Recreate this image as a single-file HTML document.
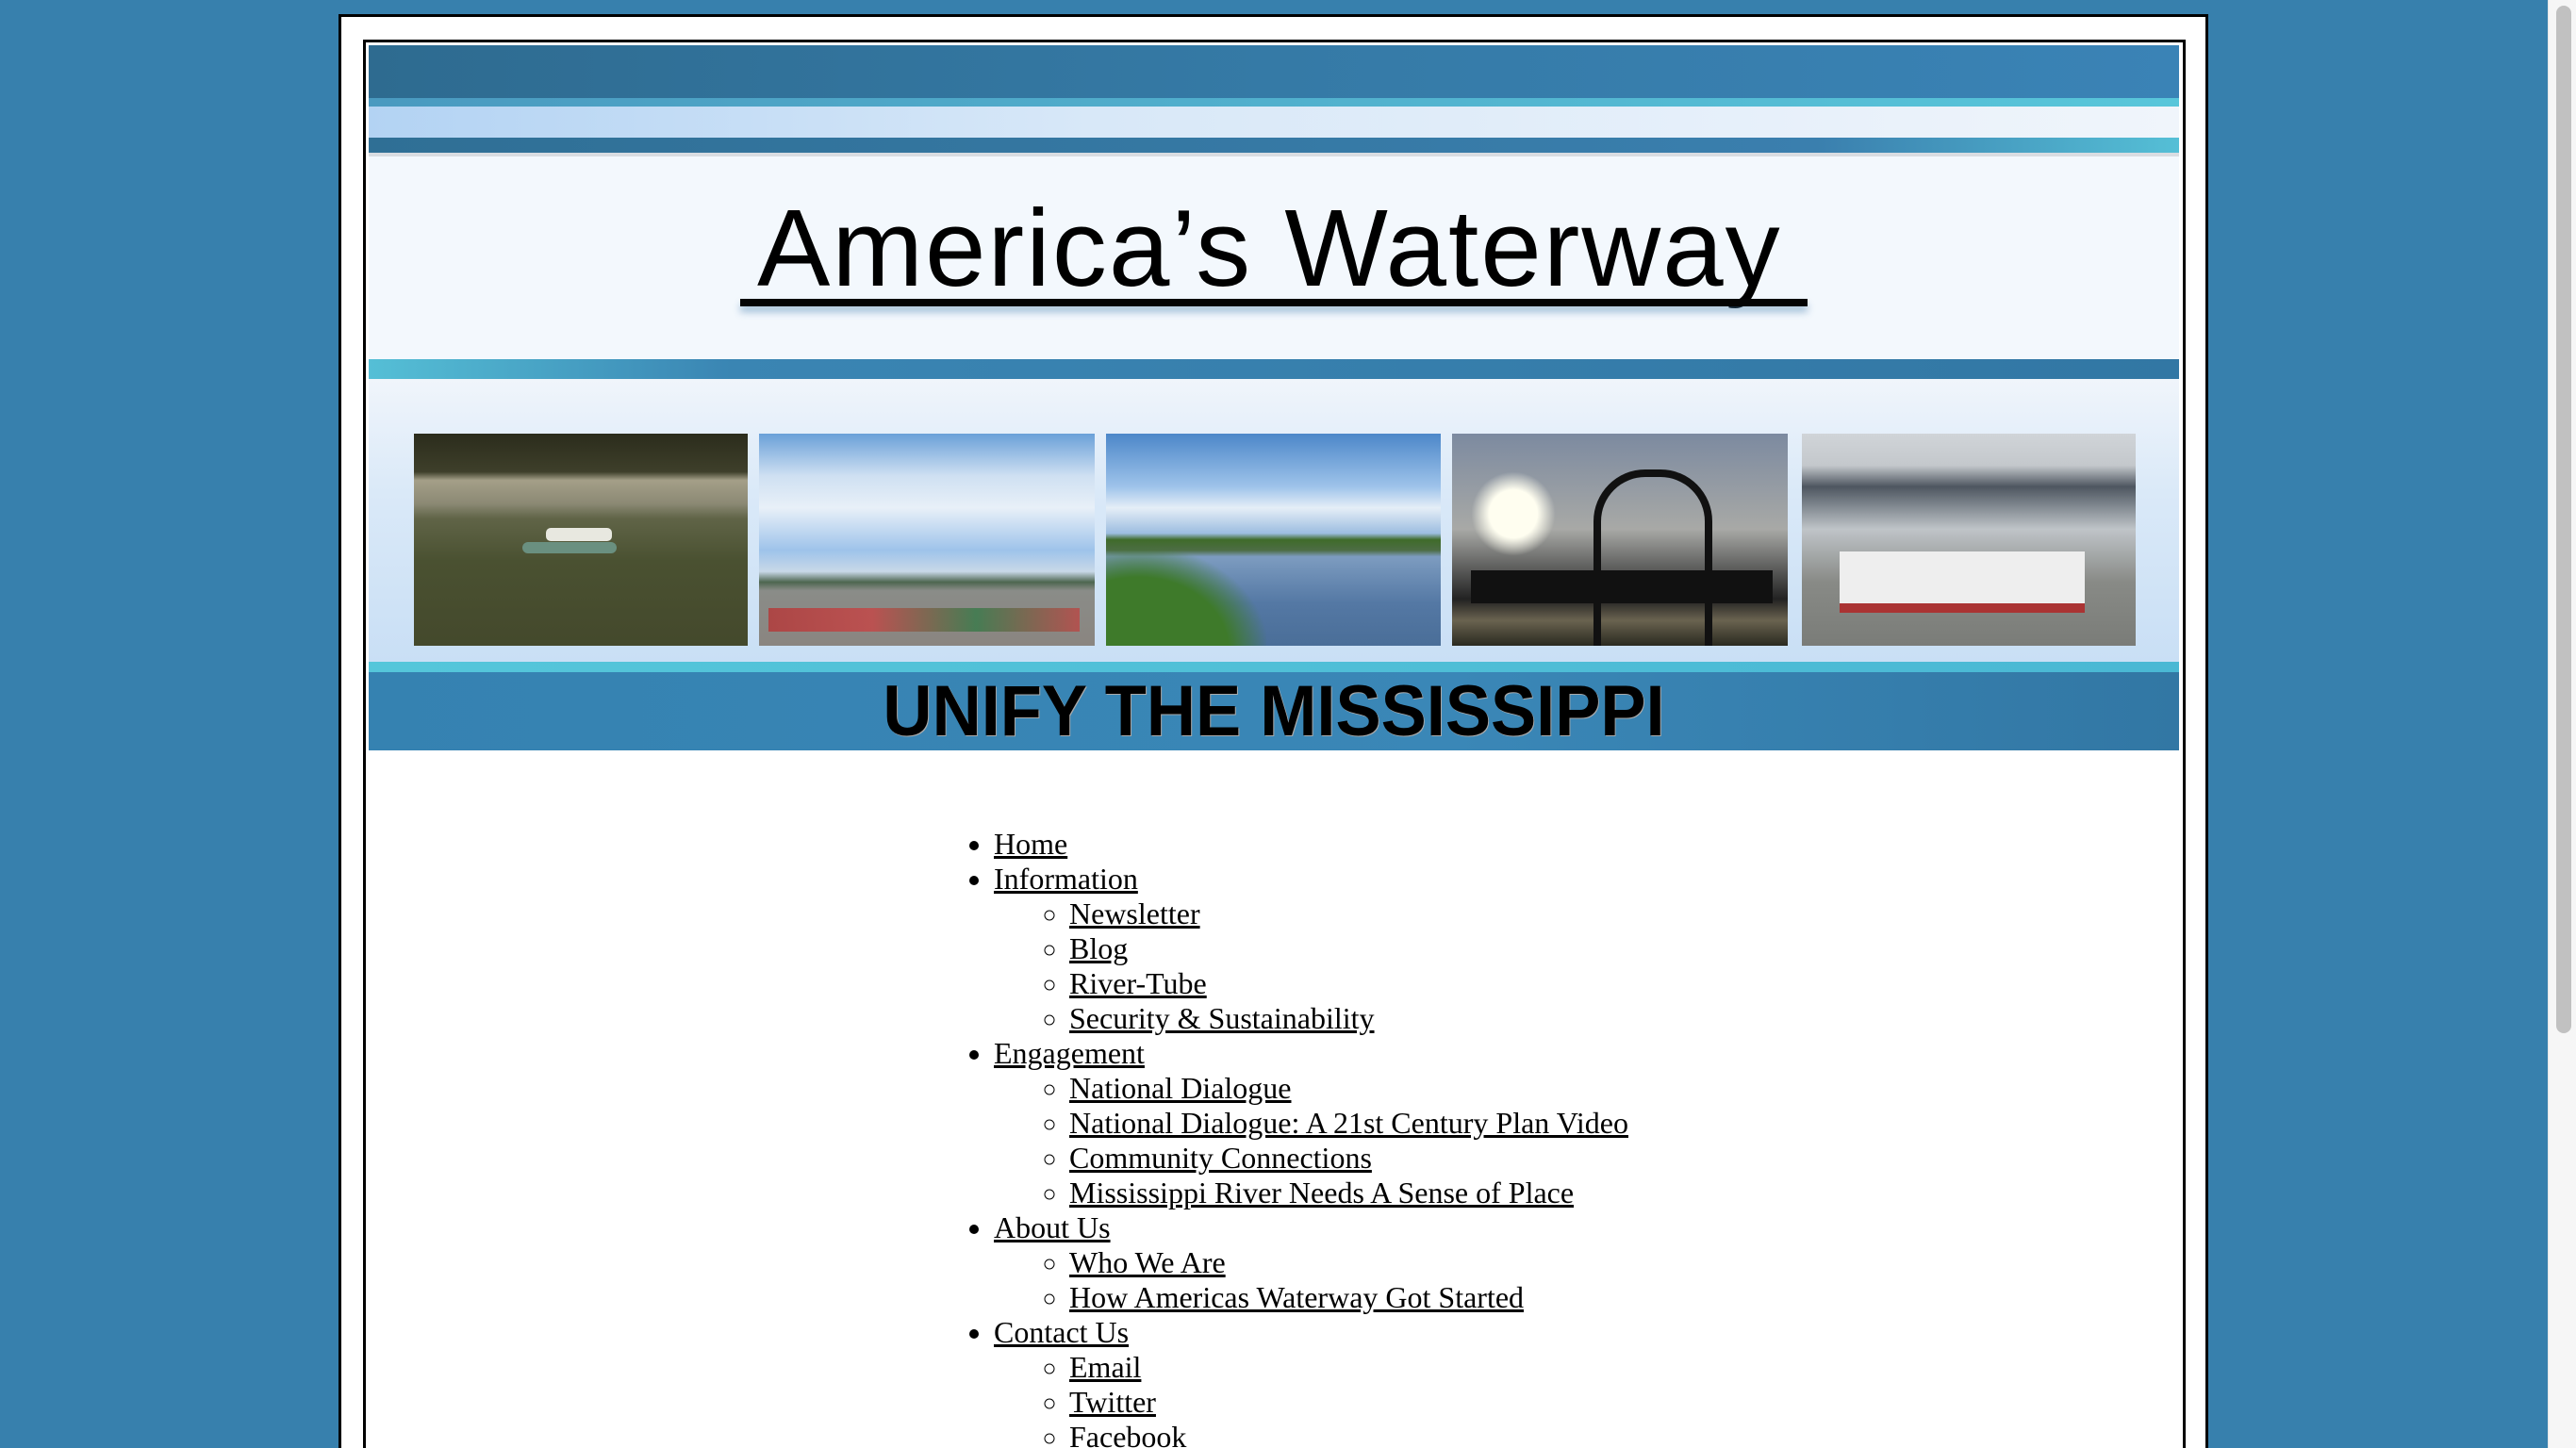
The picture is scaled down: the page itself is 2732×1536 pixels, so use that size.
<!DOCTYPE html>
<html><head><meta charset="utf-8">
<style>
html,body{margin:0;padding:0;width:2732px;height:1536px;overflow:hidden;}
body{background:#3780ad;position:relative;font-family:"Liberation Serif",serif;}
.outer{position:absolute;left:359px;top:15px;width:1977px;height:1530px;background:#fff;border:3px solid #000;}
.inner{position:absolute;left:385px;top:42px;width:1927px;height:1500px;border:3px solid #000;background:#fff;}
.hdr{position:absolute;left:391px;top:48px;width:1920px;height:748px;overflow:hidden;background:#f3f8fd;}
.b{position:absolute;left:0;width:100%;}
.title{position:absolute;left:412px;top:157px;font-family:"Liberation Sans",sans-serif;font-size:116px;letter-spacing:2px;color:#000;line-height:1;}
.uline{position:absolute;left:394px;top:269px;width:1132px;height:8px;background:#050505;box-shadow:0 6px 8px rgba(60,120,170,.45);}
.unify{position:absolute;left:0;width:100%;top:662px;text-align:center;font-family:"Liberation Sans",sans-serif;font-weight:bold;font-size:76px;letter-spacing:0px;color:#000;text-shadow:1px 1px 0 #aaa;line-height:90px;transform:scaleX(0.95);}
.ph{position:absolute;top:412px;height:225px;overflow:hidden;}
ul{margin:0;padding:0;list-style:disc;}
.nav{position:absolute;left:1054px;top:877px;font-size:32px;line-height:37px;}
.nav ul ul{padding-left:80px;list-style:circle;}
.nav a{color:#000;text-decoration:underline;}
.sb{position:absolute;left:2702px;top:0;width:30px;height:1536px;background:#f6f6f6;border-left:1px solid #e6e6e6;}
.th{position:absolute;left:8px;top:6px;width:16px;height:1090px;background:#c1c1c1;border-radius:8px;}
</style></head><body>
<div class="outer"></div>
<div class="inner"></div>
<div class="hdr">
 <div class="b" style="top:0;height:58px;background:linear-gradient(90deg,#2e6b90,#357aa6 50%,#3a83b6);"></div>
 <div class="b" style="top:56px;height:9px;background:linear-gradient(90deg,#4a9ac0,#58c6da);"></div>
 <div class="b" style="top:65px;height:33px;background:linear-gradient(90deg,#b3d3f3,#d8e8f8 40%,#f0f5fb);"></div>
 <div class="b" style="top:98px;height:16px;background:linear-gradient(90deg,#2f6f95,#3a7fae 80%,#55bfd6);"></div>
 <div class="b" style="top:114px;height:4px;background:#d9dde2;"></div>
 <div class="title">America’s Waterway</div>
 <div class="uline"></div>
 <div class="b" style="top:333px;height:21px;background:linear-gradient(90deg,#55bfd6,#3a85b3 20%,#3277a4);"></div>
 <div class="b" style="top:354px;height:300px;background:linear-gradient(180deg,#f0f5fb,#dae9f8 40%,#c9dff5);"></div>
 <div class="ph" style="left:48px;width:354px;background:linear-gradient(180deg,#2b2c1c 0%,#3e3f2a 18%,#a49f88 22%,#8b8974 33%,#606447 40%,#4a5131 60%,#44492c 100%);"><div style="position:absolute;left:115px;top:115px;width:100px;height:12px;background:#6a9080;border-radius:6px"></div><div style="position:absolute;left:140px;top:100px;width:70px;height:14px;background:#e8e8e0;border-radius:5px"></div></div>
 <div class="ph" style="left:414px;width:356px;background:linear-gradient(180deg,#6aa0d8 0%,#cfe0f2 20%,#e8f0f8 35%,#9ec3ea 55%,#c8d8e8 65%,#4d6650 70%,#8a8c88 74%,#8a8580 100%);"><div style="position:absolute;left:10px;top:185px;width:330px;height:25px;background:linear-gradient(90deg,#b23b3b,#c34848,#3b7a4b,#b84a48);opacity:.85"></div></div>
 <div class="ph" style="left:782px;width:355px;background:linear-gradient(180deg,#4c87c9 0%,#9ec3ea 25%,#e5eef7 35%,#9cbde0 47%,#3f6b2a 50%,#4d6d45 55%,#7d9cc0 58%,#5478a4 80%,#4a6e98 100%);"><div style="position:absolute;left:0;top:120px;width:170px;height:110px;background:radial-gradient(ellipse at 20% 100%,#3e7a2a 50%,rgba(60,120,40,0) 72%)"></div></div>
 <div class="ph" style="left:1149px;width:356px;background:linear-gradient(180deg,#7c8aa0 0%,#a8a9a6 45%,#222 78%,#6a6350 88%,#2a2a20 100%);"><div style="position:absolute;left:20px;top:40px;width:90px;height:90px;border-radius:50%;background:radial-gradient(#fffef0 40%,rgba(255,250,220,0) 70%)"></div><div style="position:absolute;left:150px;top:38px;width:110px;height:200px;border:8px solid #111;border-bottom:none;border-radius:55px 55px 0 0"></div><div style="position:absolute;left:20px;top:145px;width:320px;height:35px;background:#111"></div></div>
 <div class="ph" style="left:1520px;width:354px;background:linear-gradient(180deg,#d0d4d8 0%,#c4c8cc 15%,#4e5660 25%,#7a828a 33%,#bfc4c8 45%,#888a86 70%,#7a7c78 100%);"><div style="position:absolute;left:40px;top:125px;width:260px;height:55px;background:#eee;border-bottom:10px solid #a33"></div></div>
 <div class="b" style="top:654px;height:11px;background:linear-gradient(90deg,#55c6da,#4ab8d4);"></div>
 <div class="b" style="top:665px;height:83px;background:linear-gradient(90deg,#3582b1,#3a87b7 60%,#3277a4);"></div>
 <div class="unify">UNIFY THE MISSISSIPPI</div>
</div>
<div class="nav"><ul>
<li><a>Home</a></li>
<li><a>Information</a><ul><li><a>Newsletter</a></li><li><a>Blog</a></li><li><a>River-Tube</a></li><li><a>Security &amp; Sustainability</a></li></ul></li>
<li><a>Engagement</a><ul><li><a>National Dialogue</a></li><li><a>National Dialogue: A 21st Century Plan Video</a></li><li><a>Community Connections</a></li><li><a>Mississippi River Needs A Sense of Place</a></li></ul></li>
<li><a>About Us</a><ul><li><a>Who We Are</a></li><li><a>How Americas Waterway Got Started</a></li></ul></li>
<li><a>Contact Us</a><ul><li><a>Email</a></li><li><a>Twitter</a></li><li><a>Facebook</a></li></ul></li>
</ul></div>
<div class="sb"><div class="th"></div></div>
</body></html>
